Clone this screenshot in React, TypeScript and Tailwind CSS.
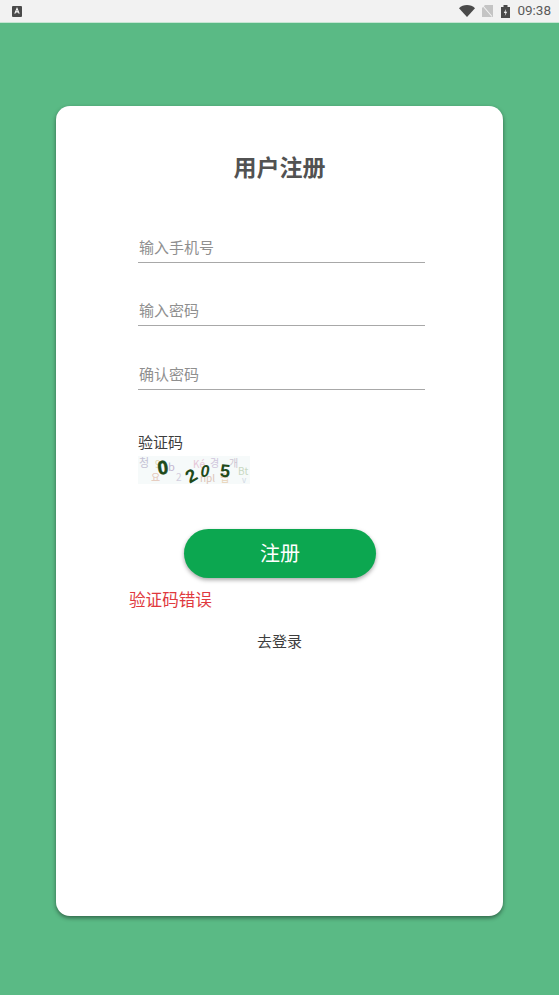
import React from "react";

const cjk = "font-['Roboto','Noto_Sans_CJK_SC',sans-serif]";

const StatusBar = () => (
  <div className="h-[23px] bg-[#f2f2f2] flex items-center pl-[12px] pr-[8px] border-b border-[#c5e6d3]">
    <svg width="10" height="11" viewBox="0 0 10 11">
      <rect width="10" height="11" rx="1" fill="#4a4a4a" />
      <path d="M2.8 7.6 5 2.4l2.2 5.2M3.6 5.9h2.8" stroke="#fff" strokeWidth="1.1" fill="none" />
    </svg>
    <div className="ml-auto flex items-center">
      <svg width="16" height="12" viewBox="0 0 16 12">
        <path d="M0 3.2C2 1.2 5 0 8 0s6 1.2 8 3.2L8 12z" fill="#4a4a4a" />
      </svg>
      <svg width="11" height="12" viewBox="0 0 11 12" className="ml-[7px]">
        <path d="M0 12V3l3-3h8v12z" fill="#c4c4c4" />
        <path d="M1 1l9 10.5" stroke="#f2f2f2" strokeWidth="1.1" />
      </svg>
      <svg width="9" height="13" viewBox="0 0 9 13" className="ml-[8px]">
        <path d="M0 2h2.5V0h4v2H9v11H0z" fill="#4a4a4a" />
        <path d="M5 4 2.8 8h1.6l-.6 3 2.4-4.2H4.6z" fill="#f2f2f2" />
      </svg>
      <span className="ml-[7px] text-[13.5px] leading-none text-[#5a5a5a] font-['Roboto',sans-serif]">09:38</span>
    </div>
  </div>
);

const Campo = ({ placeholder, className }: { placeholder: string; className: string }) => (
  <div className={`w-[287px] h-[29px] border-b border-[#a8a8a8] pl-[1px] pt-[1px] flex items-center text-[15px] text-[#8f8f8f] ${className}`}>
    {placeholder}
  </div>
);

// imagem do captcha: letras claras de fundo + numeros escuros
const Captcha = () => (
  <svg width="112" height="28" viewBox="0 0 112 28" className="block">
    <rect width="112" height="28" fill="#f6fafa" />
    <g fontFamily="'Noto Sans CJK SC', sans-serif" fontSize="10" opacity="0.8">
      <text x="1" y="11" fill="#b9b4cc" fontSize="11">청</text>
      <text x="17" y="12" fill="#d8d0a8">9</text>
      <text x="30" y="15" fill="#b7a6c9" fontSize="11">b</text>
      <text x="13" y="25" fill="#e0b8a8">요</text>
      <text x="38" y="25" fill="#c9c2d8">2</text>
      <text x="55" y="12" fill="#e2b9cf">Ké</text>
      <text x="72" y="11" fill="#c8b9d6">경</text>
      <text x="91" y="11" fill="#c2b7c8">개</text>
      <text x="100" y="19" fill="#bcd0b4">Bt</text>
      <text x="62" y="26" fill="#d6b7a8">npl</text>
      <text x="82" y="26" fill="#e6c9a8">립</text>
      <text x="104" y="27" fill="#c4cfdc" fontSize="8">v</text>
    </g>
    <g fontFamily="'Liberation Sans', sans-serif" fontWeight="700" fill="#1f4a1a" textAnchor="middle">
      <text x="25" y="18" fontSize="19" transform="rotate(-8 25 12)" stroke="#1f4a1a" strokeWidth="0.6">0</text>
      <text x="54" y="27" fontSize="19" transform="rotate(-30 54 21) scale(1 0.95)">2</text>
      <text x="67" y="21" fontSize="16" fontStyle="italic">0</text>
      <text x="87" y="21" fontSize="18" transform="rotate(6 87 15)">5</text>
    </g>
  </svg>
);

const App: React.FC = () => {
  return (
    <div className={`w-[559px] h-[995px] bg-[#5aba85] overflow-hidden ${cjk}`}>
      <StatusBar />

      <div className="ml-[56px] mt-[83px] w-[447px] h-[810px] bg-white rounded-[14px] shadow-[0_2px_4px_rgba(0,0,0,0.45)] pt-[48px] pl-[82px]">
        {/* titulo */}
        <h1 className="w-[283px] text-center text-[23px] leading-[30px] font-bold text-[#525252]">用户注册</h1>

        <Campo placeholder="输入手机号" className="mt-[50px]" />
        <Campo placeholder="输入密码" className="mt-[34px]" />
        <Campo placeholder="确认密码" className="mt-[35px]" />

        <p className="mt-[43px] text-[15px] leading-[20px] text-[#3d3d3d]">验证码</p>
        <div className="mt-[3px]">
          <Captcha />
        </div>

        {/* botao */}
        <button className="block ml-[46px] mt-[45px] w-[192px] h-[49px] rounded-full bg-[#0ca750] text-white text-[20px] shadow-[0_2px_4px_rgba(0,0,0,0.35)]">
          注册
        </button>

        <p className="-ml-[9px] mt-[12px] text-[16.6px] leading-[22px] text-[#e0393e]">验证码错误</p>

        <p className="mt-[20px] w-[283px] text-center text-[15px] leading-[20px] text-[#3d3d3d]">去登录</p>
      </div>
    </div>
  );
};

export default App;
